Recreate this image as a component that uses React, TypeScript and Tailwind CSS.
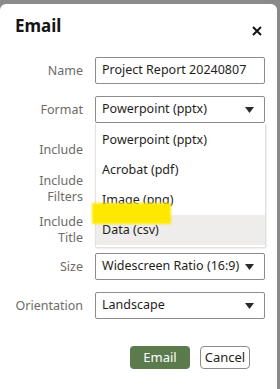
import React from 'react';

// Email export dialog with the format dropdown open

const font = "font-['Noto_Sans','Liberation_Sans',sans-serif]";

function Caret() {
  return (
    <svg width="9" height="6" viewBox="0 0 9 6" className="shrink-0">
      <path d="M0 0 H9 L4.5 6 Z" fill="#2b2a28" />
    </svg>
  );
}

function Select({ value }: { value: string }) {
  return (
    <div className="h-[27px] w-[170px] flex items-center justify-between pl-[6px] pr-[10px] border border-[#8f8b86] rounded-[2px] bg-white text-[12.5px] text-[#1f1e1c]">
      <span className="whitespace-nowrap">{value}</span>
      <Caret />
    </div>
  );
}

function Row({ label, children, className = '' }: { label: React.ReactNode; children?: React.ReactNode; className?: string }) {
  return (
    <div className={`grid grid-cols-[83px_170px] gap-x-[12px] items-center ${className}`}>
      <div className="text-right text-[12.5px] leading-[16px] text-[#6d6b68]">{label}</div>
      <div>{children}</div>
    </div>
  );
}

export default function App() {
  const options = ['Powerpoint (pptx)', 'Acrobat (pdf)', 'Image (png)', 'Data (csv)'];

  return (
    <div className={`h-[389px] w-[280px] overflow-hidden bg-[#8a8a8a] pt-[4px] ${font}`}>
      <div className="relative w-[277px] h-[392px] bg-white rounded-[6px]">
        {/* Header */}
        <div className="flex items-start justify-between pl-[15px] pr-[15px] pt-[10px]">
          <h1 className="text-[17px] leading-[24px] font-bold text-[#161513]">Email</h1>
          <svg width="10" height="10" viewBox="0 0 10 10" className="mt-[12px]">
            <path d="M1 1 L9 9 M9 1 L1 9" stroke="#161513" strokeWidth="2" />
          </svg>
        </div>

        {/* Form */}
        <div className="flex flex-col mt-[19px]">
          <Row label="Name" className="h-[27px]">
            <div className="h-[27px] w-[170px] flex items-center pl-[6px] border border-[#8f8b86] rounded-[2px] text-[12.5px] text-[#1f1e1c] whitespace-nowrap">
              Project Report 20240807
            </div>
          </Row>

          <Row label="Format" className="h-[27px] mt-[12px] relative z-10">
            <div className="relative">
              <Select value="Powerpoint (pptx)" />
              <div className="absolute left-0 top-[27px] w-[170px] bg-white border-l border-[#e4e2df] shadow-[1px_1px_2px_rgba(0,0,0,0.18)] py-[2px]">
                {options.map((o, i) => (
                  <div
                    key={o}
                    className={`h-[30px] flex items-center pl-[6px] text-[12.5px] text-[#1f1e1c] ${i === 3 ? 'bg-[#eeedeb]' : ''}`}
                  >
                    {o}
                  </div>
                ))}
              </div>
            </div>
          </Row>

          <Row label="Include" className="h-[26px] mt-[14px]" />
          <Row label={<>Include<br />Filters</>} className="h-[32px] mt-[10px]" />
          <Row label={<>Include<br />Title</>} className="h-[32px] mt-[9px]" />

          <Row label="Size" className="h-[27px] mt-[7px]">
            <Select value="Widescreen Ratio (16:9)" />
          </Row>
          <Row label="Orientation" className="h-[27px] mt-[12px]">
            <Select value="Landscape" />
          </Row>
        </div>

        {/* Footer */}
        <div className="flex justify-end gap-[10px] pr-[27px] mt-[27px]">
          <button className="h-[23px] w-[60px] rounded-[4px] bg-[#5b7b4d] text-white text-[13px]">Email</button>
          <button className="h-[23px] w-[50px] rounded-[4px] border border-[#8f8b86] bg-white text-[#1f1e1c] text-[13px]">Cancel</button>
        </div>

        {/* Yellow highlight annotation */}
        <div className="absolute left-[92px] top-[199px] w-[79px] h-[21px] bg-[#ffe800] blur-[1px] z-20" />
      </div>
    </div>
  );
}
